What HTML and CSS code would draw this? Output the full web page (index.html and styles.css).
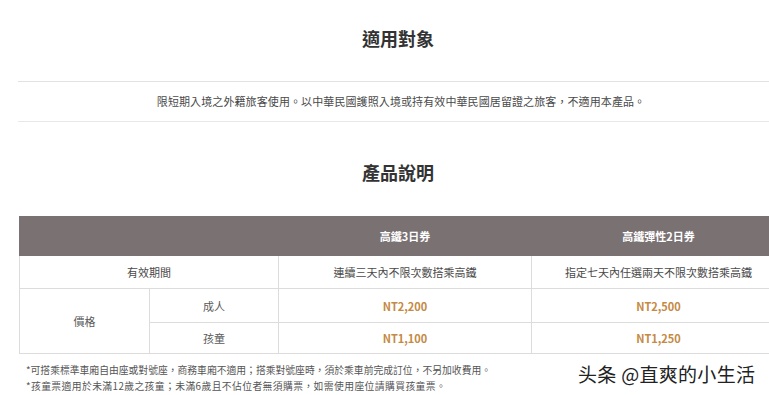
FILE: index.html
```html
<!DOCTYPE html>
<html lang="zh-Hant">
<head>
<meta charset="utf-8">
<link rel="stylesheet" href="styles.css">
</head>
<body>
<div class="page">
  <h2 class="title first">適用對象</h2>
  <div class="intro">限短期入境之外籍旅客使用。以中華民國護照入境或持有效中華民國居留證之旅客，不適用本產品。</div>
  <h2 class="title second">產品說明</h2>
  <table class="pass">
    <colgroup>
      <col class="c1"><col class="c2"><col class="c3"><col class="c4">
    </colgroup>
    <thead>
      <tr class="head">
        <th colspan="2"></th>
        <th>高鐵3日券</th>
        <th>高鐵彈性2日券</th>
      </tr>
    </thead>
    <tbody>
      <tr class="r1">
        <td colspan="2">有效期間</td>
        <td>連續三天內不限次數搭乘高鐵</td>
        <td>指定七天內任選兩天不限次數搭乘高鐵</td>
      </tr>
      <tr class="r2">
        <td rowspan="2">價格</td>
        <td>成人</td>
        <td class="price">NT2,200</td>
        <td class="price">NT2,500</td>
      </tr>
      <tr class="r3">
        <td>孩童</td>
        <td class="price">NT1,100</td>
        <td class="price">NT1,250</td>
      </tr>
    </tbody>
  </table>
  <div class="notes">
    <p>*可搭乘標準車廂自由座或對號座，商務車廂不適用；搭乘對號座時，須於乘車前完成訂位，不另加收費用。</p>
    <p class="wide">*孩童票適用於未滿12歲之孩童；未滿6歲且不佔位者無須購票，如需使用座位請購買孩童票。</p>
  </div>
</div>
<div class="watermark">头条 @直爽的小生活</div>
</body>
</html>
```

FILE: styles.css
```css
html, body {
  margin: 0;
  padding: 0;
  background: #ffffff;
  overflow: hidden;
  width: 769px;
  height: 395px;
}
body {
  position: relative;
  font-family: "Noto Sans CJK TC", "Noto Sans CJK SC", "Liberation Sans", sans-serif;
  color: #555;
}
.page {
  margin-left: 18px;
  width: 766px;
}
.title {
  margin: 0;
  font-size: 18px;
  line-height: 26px;
  font-weight: 700;
  color: #333;
  text-align: center;
}
.title.first {
  padding-top: 25px;
  padding-bottom: 30px;
  padding-right: 6px;
}
.title.second {
  margin-top: 37px;
  margin-bottom: 31px;
  padding-right: 6px;
}
.intro {
  border-top: 1px solid #e2e2e2;
  border-bottom: 1px solid #e8e8e8;
  height: 39px;
  line-height: 39px;
  font-size: 11px;
  color: #4a4a4a;
  text-align: center;
  letter-spacing: 0.1px;
}
.pass {
  margin-left: 1px;
  width: 766px;
  border-collapse: collapse;
  table-layout: fixed;
  font-size: 11px;
}
.c1 { width: 130px; }
.c2 { width: 129px; }
.c3 { width: 253px; }
.c4 { width: 254px; }
.pass th, .pass td {
  text-align: center;
  padding: 0;
  border: 1px solid #dcdcdc;
}
.head th {
  background: #7a7173;
  color: #fff;
  font-weight: 700;
  height: 38px;
  border-color: #7a7173;
  border-left: 1px solid #c9c4c5;
}
.head th:first-child {
  border-left-color: #7a7173;
}
.r1 td { height: 32px; color: #4a4a4a; }
.r2 td { height: 33px; color: #5a5a5a; }
.r3 td { height: 30px; color: #5a5a5a; }
.pass td.price {
  color: #c58a43;
  font-weight: 700;
}
.notes {
  margin-top: 8px;
  padding-left: 8px;
  font-size: 9.8px;
  color: #555;
}
.notes p {
  margin: 0;
  line-height: 16px;
}
.notes p.wide {
  letter-spacing: 0.4px;
}
.watermark {
  position: absolute;
  left: 578px;
  top: 361px;
  font-family: "Noto Sans CJK SC", sans-serif;
  font-size: 19px;
  line-height: 26px;
  color: #222;
  letter-spacing: 0.3px;
  text-shadow: 0 0 2px #fff, 0 0 2px #fff;
}
```
